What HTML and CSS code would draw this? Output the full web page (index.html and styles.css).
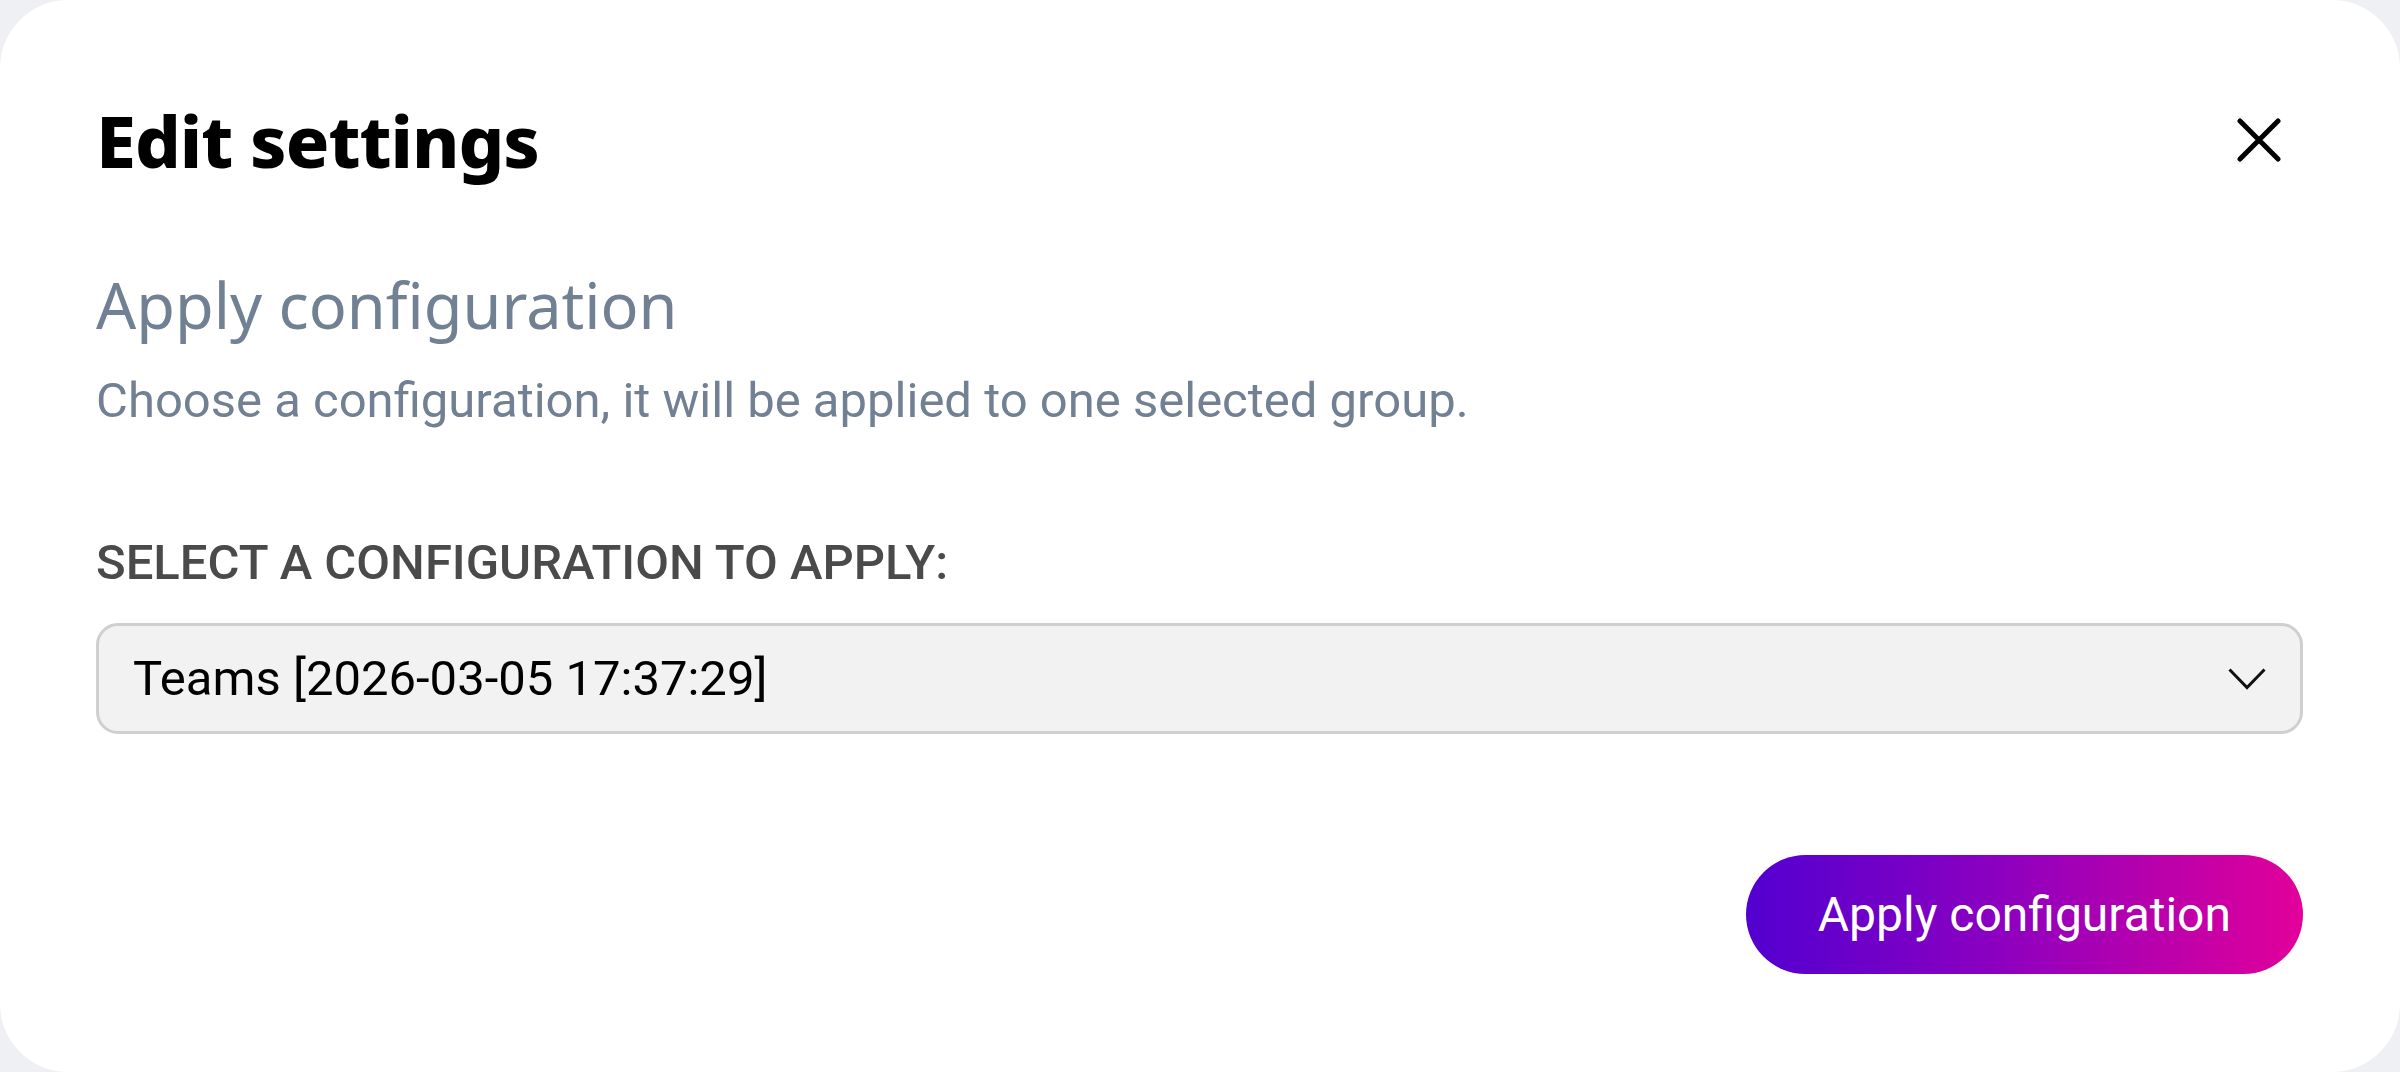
FILE: index.html
```html
<!DOCTYPE html>
<html lang="en">
<head>
<meta charset="utf-8">
<title>Edit settings</title>
<link rel="stylesheet" href="styles.css">
</head>
<body>
<div class="modal">
  <header class="modal-header">
    <h1 class="modal-title">Edit settings</h1>
    <button class="close-btn" aria-label="Close">
      <svg viewBox="0 0 44 44" width="44" height="44"><path d="M3 3 L41 41 M41 3 L3 41" stroke="#000" stroke-width="5" stroke-linecap="round" fill="none"/></svg>
    </button>
  </header>
  <h2 class="section-title">Apply configuration</h2>
  <p class="section-desc">Choose a configuration, it will be applied to one selected group.</p>
  <label class="field-label">SELECT A CONFIGURATION TO APPLY:</label>
  <div class="select">
    <span class="select-value">Teams [2026-03-05 17:37:29]</span>
    <svg class="chevron" viewBox="0 0 38 22" width="38" height="22"><path d="M1.5 1.5 L19 19.5 L36.5 1.5" stroke="#111" stroke-width="3" fill="none"/></svg>
  </div>
  <div class="actions">
    <button class="primary-btn">Apply configuration</button>
  </div>
</div>
</body>
</html>
```

FILE: styles.css
```css
html, body {
  margin: 0;
  padding: 0;
  width: 2400px;
  height: 1072px;
  overflow: hidden;
  background: #eef0f3;
}

.modal {
  box-sizing: border-box;
  width: 2400px;
  height: 1072px;
  background: #ffffff;
  border-radius: 68px;
  padding: 97px 97px 0 96px;
  display: flex;
  flex-direction: column;
  font-family: "Noto Sans", "Open Sans", sans-serif;
}

.modal-header {
  display: flex;
  align-items: center;
  justify-content: space-between;
}

.modal-title {
  margin: 0;
  font-family: "Noto Sans", sans-serif;
  font-weight: 800;
  font-size: 72px;
  line-height: 86px;
  color: #000;
  letter-spacing: -1px;
}

.close-btn {
  border: 0;
  background: none;
  padding: 0;
  margin-right: 22px;
  width: 44px;
  height: 44px;
  display: flex;
  cursor: pointer;
}

.section-title {
  margin: 83px 0 0;
  font-weight: 400;
  font-size: 63px;
  line-height: 77px;
  color: #718093;
}

.section-desc {
  margin: 30px 0 0;
  font-family: Roboto, sans-serif;
  font-size: 49px;
  line-height: 56px;
  color: #718093;
}

.field-label {
  margin-top: 106px;
  font-family: Roboto, sans-serif;
  font-weight: 500;
  font-size: 49px;
  line-height: 56px;
  color: #4a4a4a;
}

.select {
  margin-top: 32px;
  box-sizing: border-box;
  height: 111px;
  background: #f2f2f2;
  border: 3px solid #cfcfcf;
  border-radius: 22px;
  display: flex;
  align-items: center;
  justify-content: space-between;
  padding: 0 34px 0 34px;
}

.select-value {
  font-family: Roboto, sans-serif;
  font-size: 49px;
  color: #000;
}

.chevron {
  display: block;
}

.actions {
  margin-top: 121px;
  display: flex;
  justify-content: flex-end;
}

.primary-btn {
  height: 119px;
  padding: 0 72px;
  border: 0;
  border-radius: 60px;
  background: linear-gradient(90deg, #5200d0 0%, #8c00c0 45%, #e2009a 100%);
  color: #fff;
  font-family: Roboto, sans-serif;
  font-size: 48px;
  cursor: pointer;
}
```
